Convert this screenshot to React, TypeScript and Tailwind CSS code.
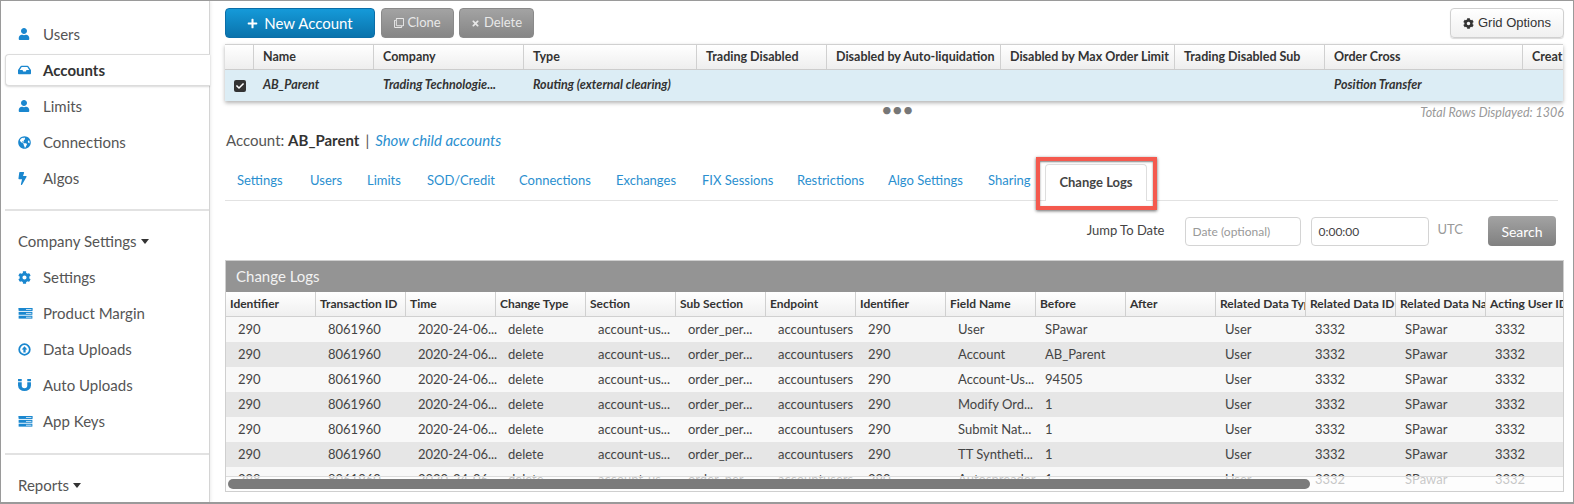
import { FaBolt, FaCheck, FaCog, FaGlobeAmericas, FaInbox, FaPlus, FaRegClone, FaTimes, FaUser } from "react-icons/fa";
import type { ReactNode } from "react";

function ServerIcon() {
  return (
    <svg viewBox="0 0 15 12" className="h-[11px] w-[15px] fill-[#1a87cf]">
      <path d="M0 0h15v3H8v-.6h5.500v-.8H0z" />
      <rect x="0" y="0" width="15" height="3.200" />
      <rect x="0" y="4.200" width="15" height="3.200" />
      <rect x="0" y="8.400" width="15" height="3.200" />
      <rect x="8" y="1.200" width="6" height="0.800" fill="#ffffff" />
      <rect x="8" y="5.400" width="6" height="0.800" fill="#ffffff" />
      <rect x="8" y="9.600" width="6" height="0.800" fill="#ffffff" />
    </svg>
  );
}

function UploadIcon() {
  return (
    <svg viewBox="0 0 14 14" className="h-[13px] w-[13px]">
      <circle cx="7" cy="7" r="5.700" fill="none" stroke="#1a87cf" strokeWidth="1.900" />
      <path d="M7 3.400 10 7H8.200v3.200H5.800V7H4z" fill="#1a87cf" />
    </svg>
  );
}

function MagnetIcon() {
  return (
    <svg viewBox="0 0 14 13" className="h-[12px] w-[13px] fill-[#1a87cf]">
      <path d="M0 0h4v2.500H0zM10 0h4v2.500h-4zM0 3.500h4V7a3 3 0 0 0 6 0V3.500h4V7A7 6 0 0 1 0 7z" />
    </svg>
  );
}

const topNav = [
  { label: "Users", icon: <FaUser className="h-[12px] w-[12px] text-[#1a87cf]" /> },
  { label: "Accounts", icon: <FaInbox className="h-[12px] w-[13px] text-[#1a87cf]" />, active: true },
  { label: "Limits", icon: <FaUser className="h-[12px] w-[12px] text-[#1a87cf]" /> },
  { label: "Connections", icon: <FaGlobeAmericas className="h-[13px] w-[13px] text-[#1a87cf]" /> },
  { label: "Algos", icon: <FaBolt className="h-[13px] w-[9px] text-[#1a87cf]" /> },
];

const companyNav = [
  { label: "Settings", icon: <FaCog className="h-[13px] w-[13px] text-[#1a87cf]" /> },
  { label: "Product Margin", icon: <ServerIcon /> },
  { label: "Data Uploads", icon: <UploadIcon /> },
  { label: "Auto Uploads", icon: <MagnetIcon /> },
  { label: "App Keys", icon: <ServerIcon /> },
];

const accountCols = [
  { name: "Name", value: "AB_Parent" },
  { name: "Company", value: "Trading Technologie..." },
  { name: "Type", value: "Routing (external clearing)" },
  { name: "Trading Disabled", value: "" },
  { name: "Disabled by Auto-liquidation", value: "" },
  { name: "Disabled by Max Order Limit", value: "" },
  { name: "Trading Disabled Sub", value: "" },
  { name: "Order Cross", value: "Position Transfer" },
  { name: "Creat", value: "" },
];

const tabs = ["Settings", "Users", "Limits", "SOD/Credit", "Connections", "Exchanges", "FIX Sessions", "Restrictions", "Algo Settings", "Sharing"];

const logCols = [
  "Identifier", "Transaction ID", "Time", "Change Type", "Section", "Sub Section", "Endpoint", "Identifier",
  "Field Name", "Before", "After", "Related Data Type", "Related Data ID", "Related Data Name", "Acting User ID",
];

const logRows = [
  ["User", "SPawar"],
  ["Account", "AB_Parent"],
  ["Account-Us...", "94505"],
  ["Modify Ord...", "1"],
  ["Submit Nat...", "1"],
  ["TT Syntheti...", "1"],
  ["Autospreader", "1"],
];

function NavItem({ icon, label, active }: { icon: ReactNode; label: string; active?: boolean }) {
  return (
    <div
      className={
        active
          ? "-mr-px ml-1 flex h-[32px] my-[2px] items-center rounded-l-[4px] border border-r-0 border-[#dcdcdc] bg-white pl-[12px] font-bold text-[#333] shadow-[0_1px_2px_rgba(0,0,0,0.15)]"
          : "ml-1 flex h-9 items-center pl-[13px] text-[#555]"
      }
    >
      <span className="flex w-[25px] shrink-0 items-center">{icon}</span>
      <span>{label}</span>
    </div>
  );
}

function Sidebar() {
  return (
    <aside className="flex w-[209px] shrink-0 flex-col border-r border-[#d4d4d4] pt-[15px] text-[15px] shadow-[1px_0_3px_rgba(0,0,0,0.08)]">
      <div className="flex h-[195px] flex-col border-b-2 border-[#e2e2e2] ml-1">
        <div className="-ml-1">
          {topNav.map((item) => (
            <NavItem key={item.label} {...item} />
          ))}
        </div>
      </div>
      <div className="ml-[17px] mt-[20px] flex h-[20px] items-center gap-1 text-[#555]">
        Company Settings <span className="mt-[1px] border-x-[4px] border-t-[5px] border-x-transparent border-t-[#333]" />
      </div>
      <div className="mt-[8px] ml-1 h-[196px] border-b-2 border-[#e2e2e2]">
        <div className="-ml-1">
          {companyNav.map((item) => (
            <NavItem key={item.label} {...item} />
          ))}
        </div>
      </div>
      <div className="ml-[17px] mt-[20px] flex h-[20px] items-center gap-1 text-[#555]">
        Reports <span className="mt-[1px] border-x-[4px] border-t-[5px] border-x-transparent border-t-[#333]" />
      </div>
    </aside>
  );
}

function Toolbar() {
  return (
    <div className="flex h-[43px] items-start pt-[7px] pl-[15px] pr-[9px]">
      <button className="flex h-[30px] w-[150px] items-center justify-center gap-[6px] rounded-[4px] border border-[#0b6ea8] bg-gradient-to-b from-[#159ad9] to-[#0a73ac] text-[15px] text-white">
        <FaPlus className="h-[11px] w-[11px]" /> New Account
      </button>
      <button className="ml-[6px] flex h-[30px] w-[73px] items-center justify-center gap-[3px] rounded-[4px] border border-[#8a8a8a] bg-gradient-to-b from-[#a3a3a3] to-[#868686] text-[13px] text-[#e8e8e8]">
        <FaRegClone className="h-[10px] w-[10px]" /> Clone
      </button>
      <button className="ml-[5px] flex h-[30px] w-[75px] items-center justify-center gap-[4px] rounded-[4px] border border-[#8a8a8a] bg-gradient-to-b from-[#a3a3a3] to-[#868686] text-[13px] text-[#e8e8e8]">
        <FaTimes className="h-[9px] w-[9px]" /> Delete
      </button>
      <button className="ml-auto flex h-[30px] w-[114px] items-center justify-center gap-[4px] rounded-[4px] border border-[#d0d0d0] bg-gradient-to-b from-white to-[#f0f0f0] font-['Liberation_Sans',sans-serif] text-[13px] text-[#333] shadow-[0_1px_1px_rgba(0,0,0,0.15)]">
        <FaCog className="h-[11px] w-[11px]" /> Grid Options
      </button>
    </div>
  );
}

function AccountsGrid() {
  return (
    <div className="ml-[15px] mr-[10px] overflow-hidden border-t border-[#d0d0d0] shadow-[0_2px_4px_rgba(0,0,0,0.3)]">
      <div className="grid h-[25px] grid-cols-[29px_120px_150px_173px_130px_174px_174px_150px_198px_41px] border-b border-[#ccc] bg-gradient-to-b from-white to-[#eeeeee] text-[12.5px] font-bold text-[#333]">
        <div className="border-r border-[#d0d0d0]" />
        {accountCols.map((col) => (
          <div key={col.name} className="flex items-center overflow-hidden border-r border-[#d0d0d0] pl-[9px] whitespace-nowrap last:border-r-0">
            {col.name}
          </div>
        ))}
      </div>
      <div className="grid h-[31px] grid-cols-[29px_120px_150px_173px_130px_174px_174px_150px_198px_41px] bg-[#dcedf5] text-[12.5px] font-bold italic text-[#333]">
        <div className="flex items-center pl-[9px]">
          <span className="flex h-[12px] w-[12px] items-center justify-center rounded-[2px] bg-[#333]">
            <FaCheck className="h-[8px] w-[8px] text-white" />
          </span>
        </div>
        {accountCols.map((col) => (
          <div key={col.name} className="flex items-center pl-[9px] whitespace-nowrap">
            {col.value}
          </div>
        ))}
      </div>
    </div>
  );
}

function Tabs() {
  return (
    <div className="mx-[15px] mt-[15px] flex h-[37px] border-b border-[#e2e2e2]">
      <div className="grid grid-cols-[73px_57px_60px_92px_97px_86px_95px_91px_100px_57px] items-center pl-[12px] pb-[2px] text-[13px] text-[#2a8fcf]">
        {tabs.map((tab) => (
          <span key={tab}>{tab}</span>
        ))}
      </div>
      <div className="relative ml-[0px] flex h-[37px] w-[102px] items-center justify-center rounded-t-[4px] border border-b-0 border-[#dedede] bg-white text-[13px] font-bold text-[#444]">
        Change Logs
        <span className="absolute -left-[10px] -top-[8px] h-[53px] w-[121px] border-[4px] border-[#f4594e] shadow-[0_1px_3px_rgba(0,0,0,0.6),inset_0_1px_2px_rgba(0,0,0,0.5)]" />
      </div>
    </div>
  );
}

function DateJump() {
  return (
    <div className="mr-[17px] mt-[15px] flex h-[30px] items-center justify-end text-[13px] text-[#444]">
      <span className="mr-[21px]">Jump To Date</span>
      <input
        placeholder="Date (optional)"
        className="mr-[10px] h-[29px] w-[116px] rounded-[4px] border border-[#d4d4d4] px-[6px] text-[12px] placeholder:text-[#999]"
      />
      <input
        defaultValue="0:00:00"
        className="mr-[8px] h-[29px] w-[118px] rounded-[4px] border border-[#d4d4d4] px-[6px] text-[12px] text-[#444]"
      />
      <span className="mr-[25px] mb-[3px] text-[#999]">UTC</span>
      <button className="h-[30px] w-[68px] rounded-[4px] bg-gradient-to-b from-[#a3a3a3] to-[#808080] text-[14px] text-white">Search</button>
    </div>
  );
}

function LogsPanel() {
  return (
    <div className="relative ml-[15px] mr-[9px] mt-[14px] h-[232px] overflow-hidden border border-[#cfcfcf]">
      <div className="flex h-[31px] items-center bg-[#949494] pl-[10px] text-[15px] text-[#f2f2f2]">Change Logs</div>
      <div className="grid h-[25px] grid-cols-[repeat(15,90px)] bg-gradient-to-b from-white to-[#efefef] text-[12px] font-bold text-[#333]">
        {logCols.map((col, i) => (
          <div key={i} className="flex items-center overflow-hidden border-r border-b border-[#d0d0d0] pl-[4px] whitespace-nowrap">
            {col}
          </div>
        ))}
      </div>
      {logRows.map((row, i) => (
        <div key={i} className="grid h-[25px] grid-cols-[repeat(15,90px)] items-center text-[13px] text-[#444] odd:bg-[#f8f8f8] even:bg-[#e6e6e6]">
          <span className="pl-[12px]">{i === 6 ? "298" : "290"}</span>
          <span className="pl-[12px]">8061960</span>
          <span className="pl-[12px] whitespace-nowrap">2020-24-06...</span>
          <span className="pl-[12px]">delete</span>
          <span className="pl-[12px] whitespace-nowrap">account-us...</span>
          <span className="pl-[12px] whitespace-nowrap">order_per...</span>
          <span className="pl-[12px]">accountusers</span>
          <span className="pl-[12px]">290</span>
          <span className="pl-[12px] whitespace-nowrap">{row[0]}</span>
          <span className="pl-[9px]">{row[1]}</span>
          <span />
          <span className="pl-[9px]">User</span>
          <span className="pl-[9px]">3332</span>
          <span className="pl-[9px]">SPawar</span>
          <span className="pl-[9px]">3332</span>
        </div>
      ))}
      <div className="absolute inset-x-0 bottom-0 h-[15px] border-t border-[#dcdcdc] bg-white/70 pt-[2px] pl-[2px]">
        <div className="h-[10px] w-[1082px] rounded-full bg-[#7b7b7b]" />
      </div>
    </div>
  );
}

export default function App() {
  return (
    <div className="flex h-[504px] w-[1574px] overflow-hidden border-x border-t border-b-2 border-[#9a9a9a] bg-white font-['Lato',sans-serif]">
      <Sidebar />
      <main className="min-w-0 flex-1">
        <Toolbar />
        <AccountsGrid />
        <div className="relative h-[28px] text-[12.5px] italic text-[#999]">
          <span className="absolute left-[671px] -top-[2px] text-[20px] leading-[20px] not-italic tracking-[-1px] text-[#777]">•••</span>
          <span className="absolute right-[9px] top-[3px]">Total Rows Displayed: 1306</span>
        </div>
        <div className="ml-[16px] h-[20px] text-[15px] text-[#555]">
          Account: <b className="text-[#333]">AB_Parent</b>
          <span className="mx-[6px]">|</span>
          <i className="text-[#2a8fcf]">Show child accounts</i>
        </div>
        <Tabs />
        <DateJump />
        <LogsPanel />
      </main>
    </div>
  );
}
